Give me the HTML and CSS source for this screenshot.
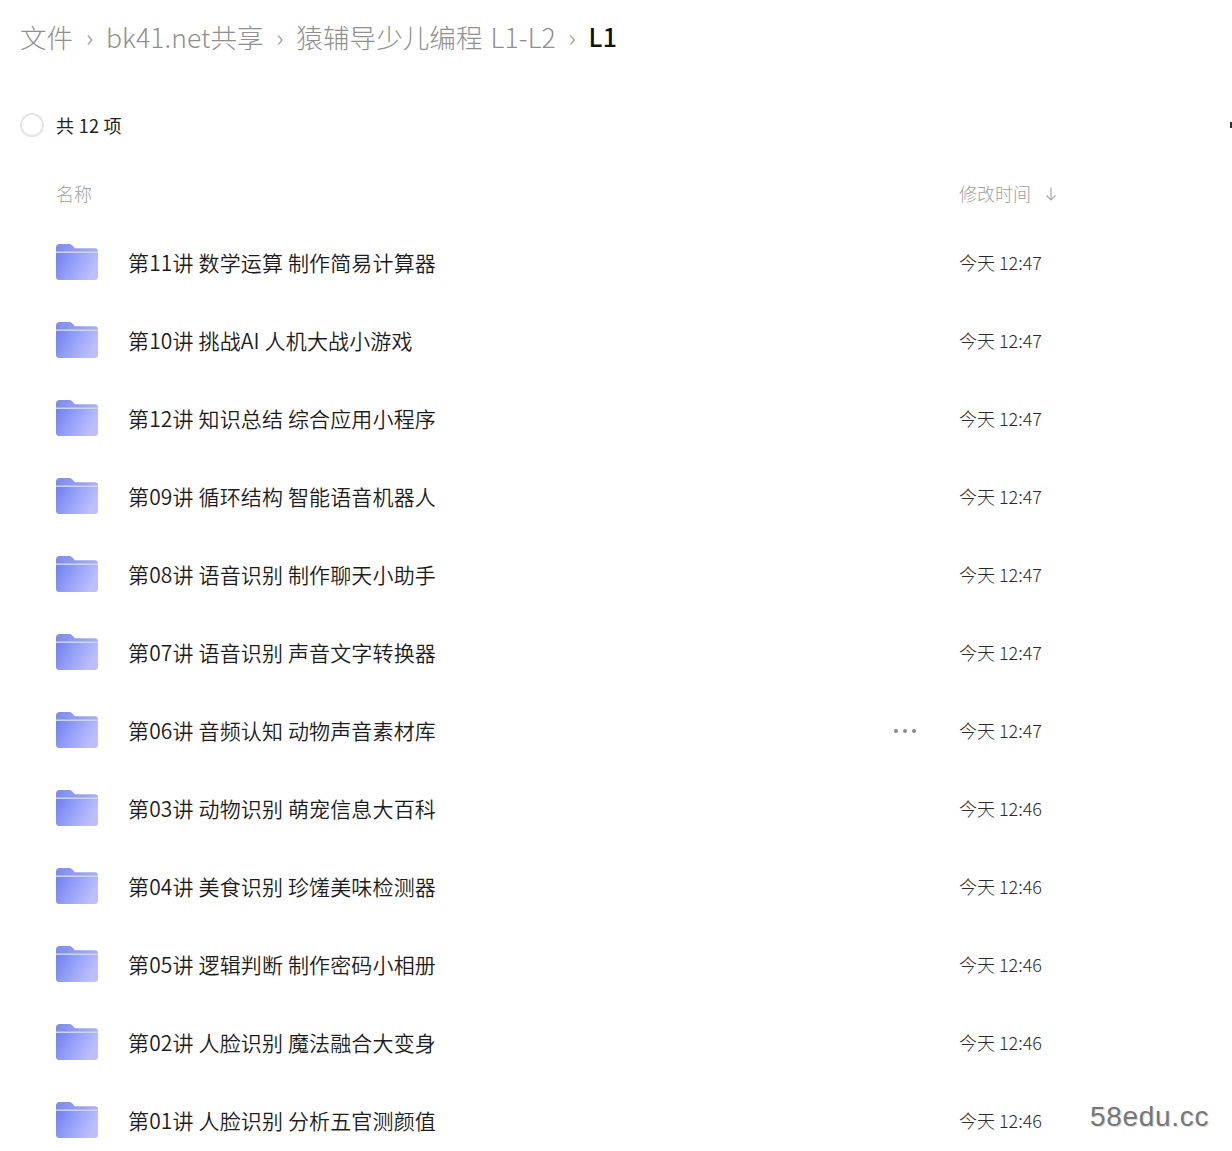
FILE: index.html
```html
<!DOCTYPE html>
<html lang="zh-CN">
<head>
    <meta charset="UTF-8">
    <title>L1</title>
    <link rel="stylesheet" href="styles.css">
</head>
<body>
    <svg class="defs" width="0" height="0">
      <defs>
        <linearGradient id="folderBody" x1="0" y1="0" x2="1" y2="0.35">
          <stop offset="0" stop-color="#6f7ff0"/>
          <stop offset="0.55" stop-color="#9aa5f8"/>
          <stop offset="1" stop-color="#bdbffb"/>
        </linearGradient>
        <linearGradient id="folderBack" x1="0" y1="0" x2="1" y2="0">
          <stop offset="0" stop-color="#7f8ce8"/>
          <stop offset="1" stop-color="#a9b2ee"/>
        </linearGradient>
        <symbol id="folder" viewBox="0 0 42 36">
          <path d="M0 3.5C0 1.5 1.5 0 3.5 0H13c1.6 0 2.6.6 3.6 1.8L19 4.2h20c1.7 0 3 1.3 3 3V12H0z" fill="url(#folderBack)"/>
          <path d="M0 8.500h42V33c0 1.7-1.300 3-3 3H3c-1.700 0-3-1.300-3-3z" fill="url(#folderBody)"/>
          <path d="M0 7.500h42v1.500H0z" fill="#ccd3fb"/>
        </symbol>
      </defs>
    </svg>

    <nav class="crumbs">
      <span>文件</span><i>›</i>
      <span>bk41.net共享</span><i>›</i>
      <span>猿辅导少儿编程 L1-L2</span><i>›</i>
      <b>L1</b>
    </nav>

    <div class="count">
      <span class="check"></span>
      <span>共 12 项</span>
      <span class="edge-mark"></span>
    </div>

    <div class="head row-grid">
      <span class="head-name">名称</span>
      <span class="head-time">修改时间
        <svg width="14" height="16" viewBox="0 0 14 16"><path d="M7 2.500V15M2.500 10.500 7 15l4.500-4.500" fill="none" stroke="#a8a8a8" stroke-width="1.200"/></svg>
      </span>
    </div>

    <ul class="files">
      <li class="row-grid"><svg class="ico"><use href="#folder"/></svg><span class="name">第11讲 数学运算 制作简易计算器</span><span></span><span class="time">今天 12:47</span></li>
      <li class="row-grid"><svg class="ico"><use href="#folder"/></svg><span class="name">第10讲 挑战AI 人机大战小游戏</span><span></span><span class="time">今天 12:47</span></li>
      <li class="row-grid"><svg class="ico"><use href="#folder"/></svg><span class="name">第12讲 知识总结 综合应用小程序</span><span></span><span class="time">今天 12:47</span></li>
      <li class="row-grid"><svg class="ico"><use href="#folder"/></svg><span class="name">第09讲 循环结构 智能语音机器人</span><span></span><span class="time">今天 12:47</span></li>
      <li class="row-grid"><svg class="ico"><use href="#folder"/></svg><span class="name">第08讲 语音识别 制作聊天小助手</span><span></span><span class="time">今天 12:47</span></li>
      <li class="row-grid"><svg class="ico"><use href="#folder"/></svg><span class="name">第07讲 语音识别 声音文字转换器</span><span></span><span class="time">今天 12:47</span></li>
      <li class="row-grid"><svg class="ico"><use href="#folder"/></svg><span class="name">第06讲 音频认知 动物声音素材库</span><span class="more"><u></u><u></u><u></u></span><span class="time">今天 12:47</span></li>
      <li class="row-grid"><svg class="ico"><use href="#folder"/></svg><span class="name">第03讲 动物识别 萌宠信息大百科</span><span></span><span class="time">今天 12:46</span></li>
      <li class="row-grid"><svg class="ico"><use href="#folder"/></svg><span class="name">第04讲 美食识别 珍馐美味检测器</span><span></span><span class="time">今天 12:46</span></li>
      <li class="row-grid"><svg class="ico"><use href="#folder"/></svg><span class="name">第05讲 逻辑判断 制作密码小相册</span><span></span><span class="time">今天 12:46</span></li>
      <li class="row-grid"><svg class="ico"><use href="#folder"/></svg><span class="name">第02讲 人脸识别 魔法融合大变身</span><span></span><span class="time">今天 12:46</span></li>
      <li class="row-grid"><svg class="ico"><use href="#folder"/></svg><span class="name">第01讲 人脸识别 分析五官测颜值</span><span></span><span class="time">今天 12:46</span></li>
    </ul>

    <div class="watermark">58edu.cc</div>
</body>
</html>
```

FILE: styles.css
```css
html, body { height: 100%; }
body {
    margin: 0;
    height: 1151px;
    overflow: hidden;
    background: #fff;
    color: #1c1c1c;
    font-family: "Noto Sans CJK SC", "Noto Sans", sans-serif;
    position: relative;
}
.defs { display: block; }

.crumbs {
    display: flex;
    align-items: center;
    height: 40px;
    margin-top: 16px;
    padding-left: 20px;
    font-size: 26.500px;
    font-weight: 300;
    letter-spacing: 0.1px;
    word-spacing: 2px;
    color: #8f8f8f;
    white-space: nowrap;
}
.crumbs i { font-style: normal; font-size: 25px; margin: 0 12.700px; color: #9a9a9a; }
.crumbs b { color: #111; font-weight: 500; font-size: 25px; }

.count {
    display: flex;
    align-items: center;
    height: 30px;
    margin-top: 54px;
    padding-left: 20px;
    font-size: 18px;
    letter-spacing: 0.3px;
    color: #222;
}
.check {
    width: 20px;
    height: 20px;
    border: 2px solid #e4e4e4;
    border-radius: 50%;
    margin-right: 12px;
}
.edge-mark { width: 2px; height: 6px; background: #333; margin-left: auto; }

.row-grid {
    display: grid;
    grid-template-columns: 72px 759px 72px 1fr;
    align-items: center;
    padding-left: 56px;
}
.head { height: 30px; margin-top: 38px; font-size: 18px; font-weight: 300; color: #a0a0a0; }
.head-name { grid-column: 1 / 3; }
.head-time { grid-column: 4; display: flex; align-items: center; gap: 13px; }

.files { list-style: none; margin: 15px 0 0; padding: 0; }
.files li { height: 78px; }
.ico { width: 42px; height: 36px; display: block; }
.name { font-size: 21px; font-weight: 350; letter-spacing: 0.15px; color: #1c1c1c; white-space: nowrap; }
.time { font-size: 18px; font-weight: 300; color: #2a2a2a; white-space: nowrap; }

.more { display: flex; gap: 5px; padding: 2px 0 0 7px; }
.more u { width: 4px; height: 4px; border-radius: 50%; background: #8a8a8a; }

.watermark {
    position: absolute;
    left: 1090px;
    top: 1101px;
    font-family: "Liberation Sans", sans-serif;
    font-size: 28px;
    letter-spacing: 0.7px;
    color: #777;
    text-shadow: 1px 1px 0 #d8d8d8;
}
```
